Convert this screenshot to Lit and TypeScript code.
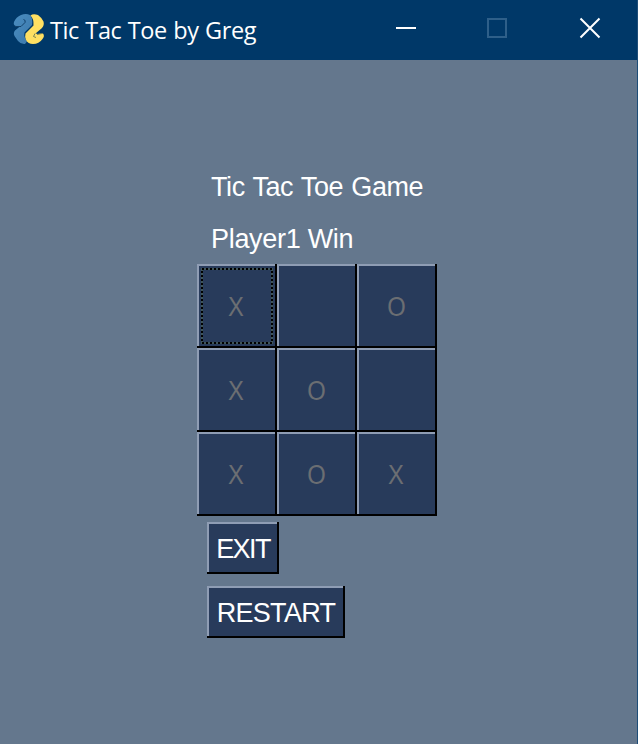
import { LitElement, html, css, svg } from "lit";
import { customElement, property, state } from "lit/decorators.js";

@customElement("title-bar")
class TitleBar extends LitElement {
  @property() heading = "";
  static styles = css`
    :host { display: flex; height: 60px; background: #003868; color: #fff; box-sizing: border-box; padding-left: 13px; }
    .logo { width: 32px; height: 32px; margin-top: 13px; flex: none; }
    .name { font: 23.5px/61px "Open Sans", "Noto Sans", sans-serif; margin-left: 5px; letter-spacing: -0.4px; word-spacing: 0.7px; white-space: nowrap; flex: 1; height: 60px; }
    .controls { display: flex; flex: none; margin-right: 1px; }
    .controls svg { width: 92px; height: 60px; display: block; }
  `;
  render() {
    return html`
      <svg class="logo" viewBox="0 0 32 32">
        <defs>
          <linearGradient id="blue" x1="0" y1="0" x2="1" y2="1"><stop offset="0" stop-color="#4a8dc0"/><stop offset="1" stop-color="#3b78ab"/></linearGradient>
        </defs>
        <path fill="url(#blue)" d="M1 9 Q3 4 8 2 Q13 0 17 2 Q20 5 19 12 L11.5 19.5 Q10.500 24 14 28.500 L12 31 Q8 31.500 5 28 L1.500 23 Q0 20 2 17.500 L7.500 13 L3 13 Q0 12 1 9 Z"/>
        <path fill="#ffe062" d="M17.500 2.500 Q20 0.500 25 2 Q28 4 30.500 8.500 Q31.500 12 29 15 L22.500 20.500 L25 21 L30 20.500 Q32 23 29.500 26 Q26 31 20 31 Q15 31 13 27 Q11.500 24 12.500 20.500 L20.500 12.500 Q21 6 17.500 2.500 Z"/>
        <path fill="none" stroke="#12426c" stroke-width="1" d="M2 13.500 L8 13.500 L12 9.500 Q13 7 10.500 6.500"/>
        <path fill="none" stroke="#7a8355" stroke-width="1" d="M22 20.500 L20.500 23.500 L23 24.500 M24 21.500 L29 20.500"/>
      </svg>
      <span class="name">${this.heading}</span>
      <div class="controls">
        <svg viewBox="0 0 92 60"><path d="M36 28H56" stroke="#fff" stroke-width="2"/></svg>
        <svg viewBox="0 0 92 60"><path d="M36 19H54V37H36Z" fill="none" stroke="#2e5f89" stroke-width="2"/></svg>
        <svg viewBox="0 0 92 60"><path d="M36.500 18.500L55.500 37.500M55.500 18.500L36.500 37.500" stroke="#fff" stroke-width="2"/></svg>
      </div>`;
  }
}

@customElement("app-root")
class AppRoot extends LitElement {
  @state() cells = ["X", "", "O", "X", "O", "", "X", "O", "X"];
  static styles = css`
    :host { display: block; height: 744px; background: #64778d; box-sizing: border-box; border-right: 1px solid #1d4d78; font-family: "Liberation Sans", Arial, sans-serif; font-size: 27px; color: #fff; }
    main { padding: 107px 0 0 197px; }
    .line { height: 40px; line-height: 40px; margin: 0 0 12px 14px; white-space: nowrap; letter-spacing: -0.42px; word-spacing: 1.1px; }
    .status { margin-bottom: 5px; letter-spacing: -0.3px; word-spacing: 0; }
    .board { display: grid; grid-template-columns: repeat(3, 80px); grid-auto-rows: 84px; }
    button { font: inherit; color: inherit; border: 0; padding: 2px 0 0; margin: 0; border-radius: 0; background: #283b5b; box-shadow: inset -2px -2px #000, inset 2px 2px #8f9db4; white-space: nowrap; }
    .cell { color: #6b6e72; position: relative; }
    .mark { display: inline-block; transform: scaleX(0.88); }
    .x { margin-right: 1px; }
    .focus { position: absolute; left: 4px; top: 4px; }
    .exit, .restart { display: block; height: 52px; margin-left: 10px; }
    .exit { width: 72px; margin-top: 6px; letter-spacing: -1.6px; }
    .restart { width: 138px; margin-top: 12px; letter-spacing: -0.7px; }
  `;
  render() {
    return html`
      <title-bar .heading=${"Tic Tac Toe by Greg"}></title-bar>
      <main>
        <div class="line">Tic Tac Toe Game</div>
        <div class="line status">Player1 Win</div>
        <div class="board">
          ${this.cells.map((mark, i) => html`<button class="cell"><span class="mark ${mark.toLowerCase()}">${mark}</span>${i === 0
            ? html`<svg class="focus" width="72" height="76" viewBox="0 0 72 76">${svg`
                <rect x="1" y="1" width="70" height="74" fill="none" stroke="#3f5558" stroke-width="2"/>
                <rect x="1" y="1" width="70" height="74" fill="none" stroke="#000" stroke-width="2" stroke-dasharray="2 2"/>`}</svg>`
            : ""}</button>`)}
        </div>
        <button class="exit">EXIT</button>
        <button class="restart">RESTART</button>
      </main>`;
  }
}
